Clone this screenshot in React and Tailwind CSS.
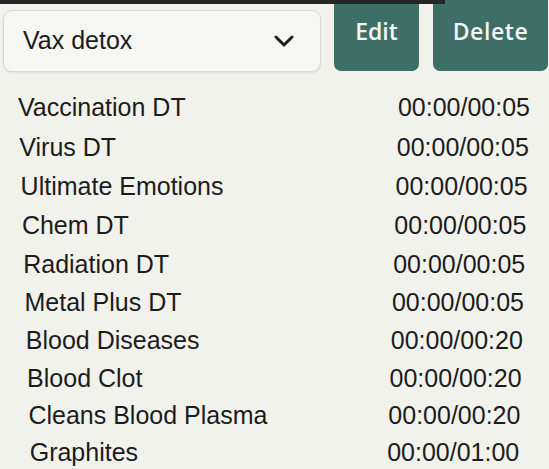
import React, { useState } from "react";

const TRACKS = [
  { name: "Vaccination DT", time: "00:00/00:05" },
  { name: "Virus DT", time: "00:00/00:05" },
  { name: "Ultimate Emotions", time: "00:00/00:05" },
  { name: "Chem DT", time: "00:00/00:05" },
  { name: "Radiation DT", time: "00:00/00:05" },
  { name: "Metal Plus DT", time: "00:00/00:05" },
  { name: "Blood Diseases", time: "00:00/00:20" },
  { name: "Blood Clot", time: "00:00/00:20" },
  { name: "Cleans Blood Plasma", time: "00:00/00:20" },
  { name: "Graphites", time: "00:00/01:00" },
];

const Chevron = () => (
  <svg width="20" height="12" viewBox="0 0 20 12" fill="none">
    <path d="M2 2l8 8 8-8" stroke="#1c1c1c" strokeWidth="3" strokeLinecap="round" strokeLinejoin="round" />
  </svg>
);

const App = () => {
  const [program] = useState("Vax detox");

  return (
    <div
      className="relative w-[549px] h-[469px] overflow-hidden bg-[#f2f2ed] text-[#1c1c1c]"
      style={{ fontFamily: '"Liberation Sans", Arial, sans-serif' }}
    >
      {/* strip of the screen above */}
      <div className="absolute left-0 top-0 w-[445px] h-[4px] bg-[#262626] z-10" />

      <div className="flex items-start">
        <div className="ml-[3px] mt-[10px] w-[318px] h-[62px] flex items-center justify-between pl-[19px] pr-[26px] rounded-[9px] border border-[#d9d9d3] bg-[#f6f6f2] shadow-[0_1px_2px_rgba(0,0,0,0.08)]">
          <span className="text-[25px]">{program}</span>
          <Chevron />
        </div>

        <button
          className="ml-[13px] w-[85px] h-[71px] pb-[8px] flex items-center justify-center rounded-b-[7px] bg-[#3e6f67] text-[#f4f4f0] text-[23px] font-semibold"
          style={{ fontFamily: '"Open Sans", sans-serif' }}
        >
          Edit
        </button>
        <button
          className="ml-[14px] w-[115px] h-[71px] pb-[8px] flex items-center justify-center rounded-b-[7px] bg-[#3e6f67] text-[#f4f4f0] text-[23px] font-semibold tracking-[0.6px]"
          style={{ fontFamily: '"Open Sans", sans-serif' }}
        >
          Delete
        </button>
      </div>

      <ul className="mt-[16px]">
        {TRACKS.map((t, i) => (
          <li
            key={t.name}
            className="flex items-center justify-between text-[25px] leading-none"
            style={{
              height: 39.8 - i * 0.33,
              paddingLeft: 18 + i * 1.3,
              paddingRight: 19 + i * 1.2,
            }}
          >
            <span>{t.name}</span>
            <span>{t.time}</span>
          </li>
        ))}
      </ul>
    </div>
  );
};

export default App;
